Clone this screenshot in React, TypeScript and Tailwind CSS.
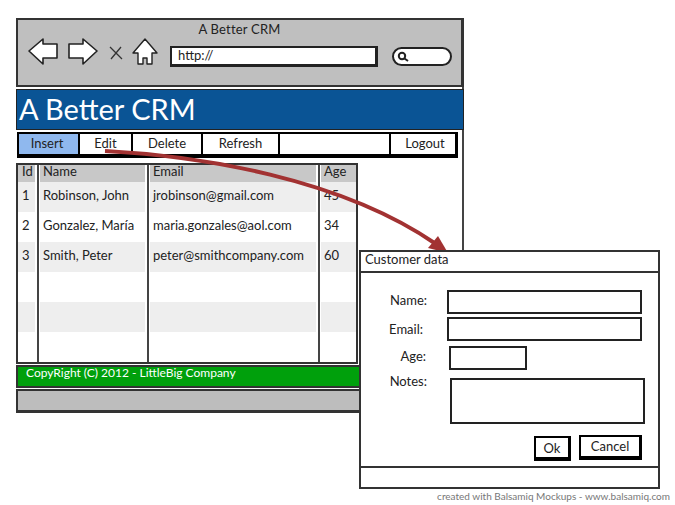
const FONT = "font-['Lato','Noto_Sans',sans-serif]";

const rows = [
  { id: '1', name: 'Robinson, John', email: 'jrobinson@gmail.com', age: '45' },
  { id: '2', name: 'Gonzalez, María', email: 'maria.gonzales@aol.com', age: '34' },
  { id: '3', name: 'Smith, Peter', email: 'peter@smithcompany.com', age: '60' },
  { id: '', name: '', email: '', age: '' },
  { id: '', name: '', email: '', age: '' },
  { id: '', name: '', email: '', age: '' },
];

function Column({ title, values, className, pad }: { title: string; values: string[]; className: string; pad: string }) {
  return (
    <div className={className}>
      <div className={`h-[17px] bg-[#c8c8c8] ${pad} leading-[12px]`}>{title}</div>
      {values.map((v, i) => (
        <div key={i} className={`h-[30px] ${pad} leading-[26px] ${i % 2 === 0 ? 'bg-[#eeeeee]' : 'bg-white'}`}>{v}</div>
      ))}
    </div>
  );
}

function Browser() {
  return (
    <div className="w-[448px] h-[395px] border-r-2 border-[#444] flex flex-col">
      <div className="h-[69px] bg-[#bfbfbf] border-2 border-[#333] border-r-[3px] mr-[-2px] shrink-0">
        <div className="text-center text-[13px] leading-[17px] mt-[1px] tracking-[0.2px]">A Better CRM</div>
        <div className="flex items-start pl-[10px]">
          <svg width="30" height="28" viewBox="0 0 30 28" className="shrink-0">
            <path d="M1 13 L15 1 L15 6 L29 6 L29 20 L15 20 L15 26 Z" fill="#fff" stroke="#222" strokeWidth="1.6" strokeLinejoin="round" />
          </svg>
          <svg width="30" height="28" viewBox="0 0 30 28" className="ml-[10px] shrink-0">
            <path d="M29 13 L15 1 L15 6 L1 6 L1 20 L15 20 L15 26 Z" fill="#fff" stroke="#222" strokeWidth="1.6" strokeLinejoin="round" />
          </svg>
          <svg width="14" height="14" viewBox="0 0 14 14" className="ml-[11px] mt-[8px] shrink-0">
            <path d="M1 1 L13 13 M12 1 L2 13" fill="none" stroke="#333" strokeWidth="1.3" />
          </svg>
          <svg width="26" height="28" viewBox="0 0 26 28" className="ml-[9px] shrink-0">
            <path d="M13 1 L25 15 L20 15 L20 26 L15 26 L15 20 L11 20 L11 26 L6 26 L6 15 L1 15 Z" fill="#fff" stroke="#222" strokeWidth="1.4" strokeLinejoin="round" />
          </svg>
          <div className="ml-[12px] mt-[8px] w-[208px] h-[21px] bg-white border-2 border-[#222] border-r-[3px] border-b-[3px] text-[13px] leading-[14px] pl-[6px] shrink-0">http://</div>
          <div className="ml-[14px] mt-[9px] w-[60px] h-[19px] bg-white border-2 border-[#222] rounded-full flex items-center pl-[3px] shrink-0">
            <svg width="12" height="12" viewBox="0 0 12 12">
              <circle cx="5" cy="5" r="3.2" fill="none" stroke="#222" strokeWidth="2" />
              <path d="M7.5 7.5 L11 10" stroke="#222" strokeWidth="2" />
            </svg>
          </div>
        </div>
      </div>
      <div className="h-[41px] mt-[2px] bg-[#0a5495] border border-[#222] text-white text-[29px] leading-[38px] pl-[2px] shrink-0 mr-[-2px]">A Better CRM</div>
      <div className="flex h-[26px] mt-[2px] ml-[1px] w-[441px] border-2 border-black border-r-[3px] border-b-[4px] text-[13px] leading-[19px] text-center shrink-0 bg-white">
        <div className="w-[61px] bg-[#8fb8ee] border-r-2 border-black pr-[3px]">Insert</div>
        <div className="w-[53px] border-r-2 border-black">Edit</div>
        <div className="w-[70px] border-r-2 border-black">Delete</div>
        <div className="w-[77px] border-r-2 border-black">Refresh</div>
        <div className="w-[111px] border-r-2 border-black"></div>
        <div className="flex-1 pl-[4px]">Logout</div>
      </div>
      <div className="flex w-[342px] h-[201px] mt-[5px] border-2 border-[#333] text-[13px] shrink-0 bg-white">
        <Column title="Id" values={rows.map(r => r.id)} pad="pl-[4px]" className="w-[21px] pr-[2px] border-r-2 border-[#444] shrink-0" />
        <Column title="Name" values={rows.map(r => r.name)} pad="pl-[3px]" className="w-[110px] pl-[1px] pr-[2px] border-r-2 border-[#444] shrink-0" />
        <Column title="Email" values={rows.map(r => r.email)} pad="pl-[3px]" className="w-[171px] pl-[1px] pr-[2px] border-r-2 border-[#444] shrink-0" />
        <Column title="Age" values={rows.map(r => r.age)} pad="pl-[3px]" className="flex-1 pl-[1px]" />
      </div>
      <div className="h-[23px] mt-[1px] bg-[#00a00c] border-2 border-[#333] text-white text-[12px] leading-[11px] pl-[8px] shrink-0">CopyRight (C) 2012 - LittleBig Company</div>
      <div className="h-[24px] mt-[1px] bg-[#bdbdbd] border-2 border-[#333] border-b-[3px] shrink-0"></div>
    </div>
  );
}

function Dialog() {
  return (
    <div className="absolute left-[359px] top-[250px] w-[301px] h-[239px] bg-white border-2 border-[#333] flex flex-col text-[13px]">
      <div className="h-[21px] border-b-2 border-[#333] pl-[4px] leading-[15px] shrink-0">Customer data</div>
      <div className="flex-1 relative pt-[17px]">
        <div className="flex h-[24px]">
          <span className="w-[86px] text-right pr-[20px] leading-[21px]">Name:</span>
          <div className="w-[195px] h-[24px] border-2 border-[#222]"></div>
        </div>
        <div className="flex h-[24px] mt-[3px]">
          <span className="w-[86px] text-right pr-[24px] leading-[25px]">Email:</span>
          <div className="w-[195px] h-[24px] border-2 border-[#222]"></div>
        </div>
        <div className="flex h-[24px] mt-[5px]">
          <span className="w-[88px] text-right pr-[23px] leading-[21px]">Age:</span>
          <div className="w-[78px] h-[24px] border-2 border-[#222]"></div>
        </div>
        <div className="flex mt-[8px]">
          <span className="w-[89px] text-right pr-[23px] leading-[6px]">Notes:</span>
          <div className="w-[195px] h-[46px] border-2 border-[#222]"></div>
        </div>
        <div className="flex justify-end gap-[8px] pr-[16px] mt-[12px]">
          <div className="w-[37px] h-[25px] border-2 border-black border-r-[3px] border-b-[4px] text-center leading-[20px]">Ok</div>
          <div className="w-[63px] h-[25px] border-2 border-black border-r-[3px] border-b-[4px] text-center leading-[19px] -mt-[1px]">Cancel</div>
        </div>
      </div>
      <div className="h-[21px] border-t-2 border-[#333] shrink-0"></div>
    </div>
  );
}

export default function App() {
  return (
    <div className={`relative w-[675px] h-[505px] bg-white overflow-hidden pl-[16px] pt-[18px] text-[#222] ${FONT}`}>
      <Browser />
      <svg className="absolute left-0 top-0 pointer-events-none" width="675" height="505" viewBox="0 0 675 505">
        <path d="M105 151 C 200 156, 340 178, 436 244" fill="none" stroke="#a23232" strokeWidth="4" />
        <path d="M448 253 L428 248 L438 236 Z" fill="#a23232" />
      </svg>
      <Dialog />
      <div className="absolute right-[5px] top-[489px] text-[10px] leading-[14px] text-[#777]">created with Balsamiq Mockups - www.balsamiq.com</div>
    </div>
  );
}
